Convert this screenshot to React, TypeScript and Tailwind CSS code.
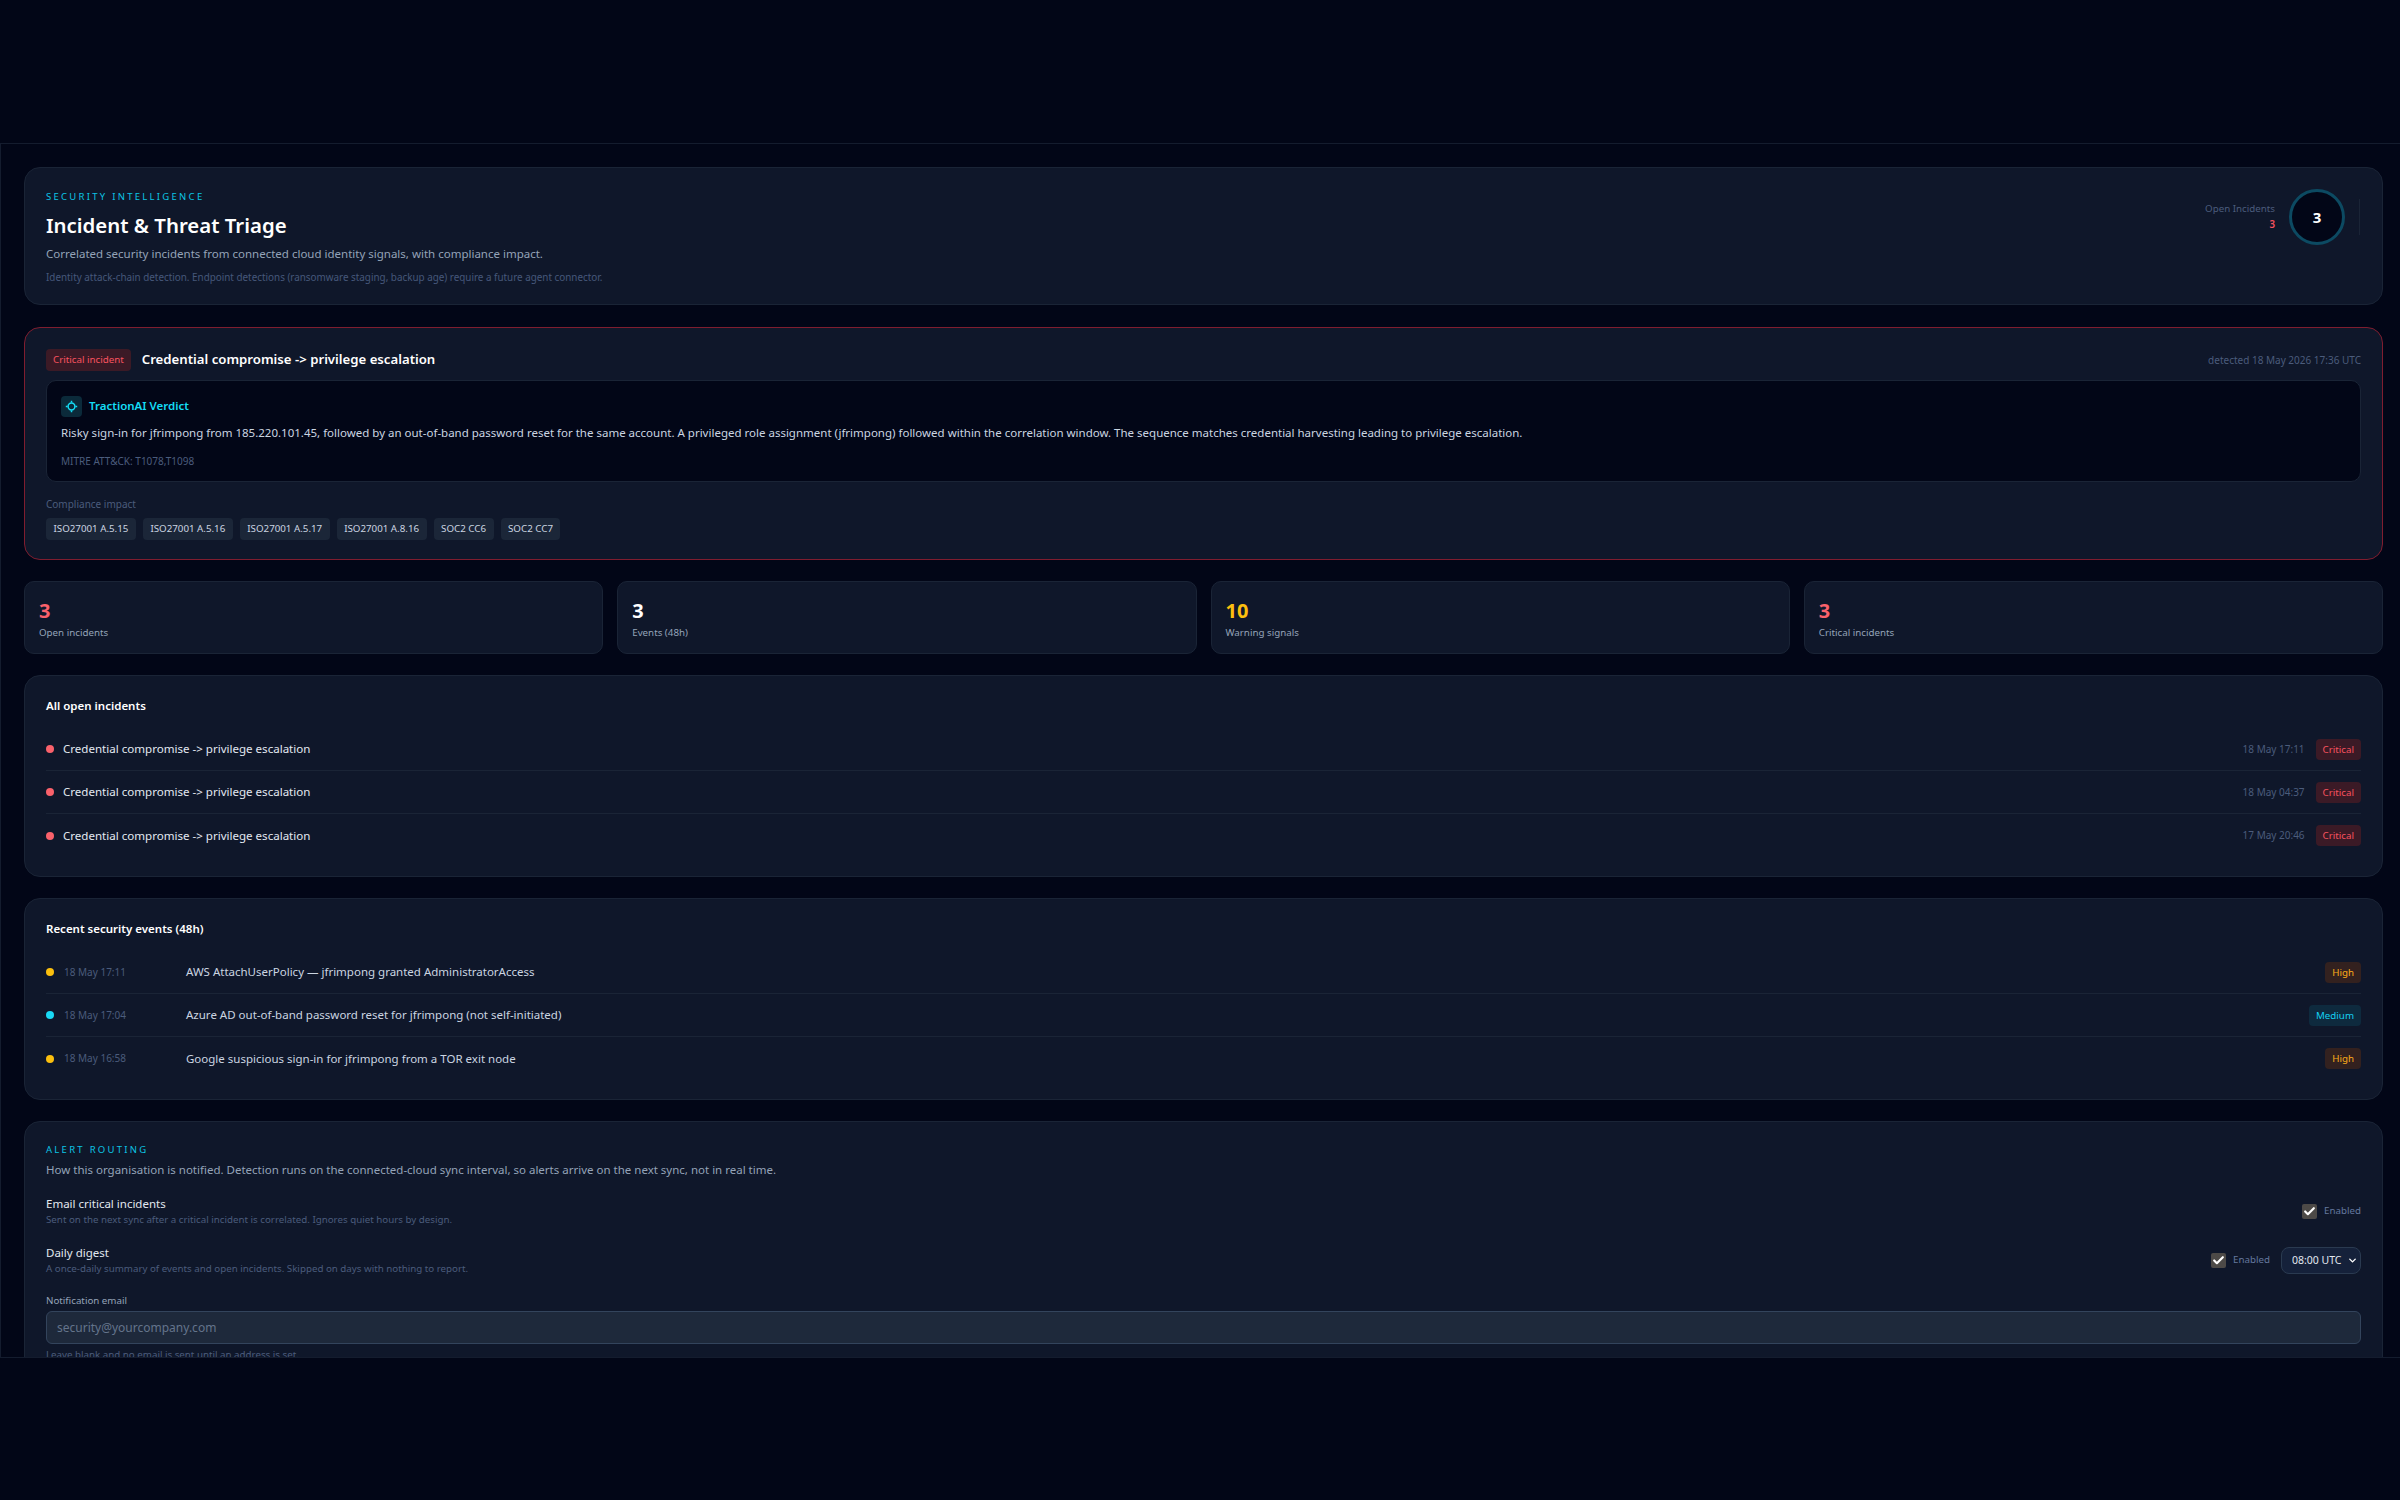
import { Check, ChevronDown } from "lucide-react";

const stats = [
  { value: "3", label: "Open incidents", color: "text-[#f9616b]" },
  { value: "3", label: "Events (48h)", color: "text-white" },
  { value: "10", label: "Warning signals", color: "text-[#fbbf0e]" },
  { value: "3", label: "Critical incidents", color: "text-[#f9616b]" },
];

const compliance = [
  "ISO27001 A.5.15",
  "ISO27001 A.5.16",
  "ISO27001 A.5.17",
  "ISO27001 A.8.16",
  "SOC2 CC6",
  "SOC2 CC7",
];

const incidents = ["18 May 17:11", "18 May 04:37", "17 May 20:46"];

const events = [
  {
    time: "18 May 17:11",
    text: "AWS AttachUserPolicy — jfrimpong granted AdministratorAccess",
    level: "High",
    dot: "bg-[#fbbf0e]",
    badge: "bg-[#33211f] text-[#fbab1a]",
  },
  {
    time: "18 May 17:04",
    text: "Azure AD out-of-band password reset for jfrimpong (not self-initiated)",
    level: "Medium",
    dot: "bg-[#19d9f5]",
    badge: "bg-[#0e2a3e] text-[#14d0f2]",
  },
  {
    time: "18 May 16:58",
    text: "Google suspicious sign-in for jfrimpong from a TOR exit node",
    level: "High",
    dot: "bg-[#fbbf0e]",
    badge: "bg-[#33211f] text-[#fbab1a]",
  },
];

function Checkbox() {
  return (
    <span className="flex h-[15px] w-[15px] items-center justify-center rounded-[2px] bg-[#4d4a47] text-white">
      <Check size={13} strokeWidth={4} />
    </span>
  );
}

export default function App() {
  return (
    <div className="h-[1500px] overflow-hidden bg-[#020617] font-['Noto_Sans',sans-serif]">
      <div className="h-[143px]" />
      {/* Main scroll area, cut off at the bottom */}
      <main className="h-[1215px] overflow-hidden border-y border-l border-[#141c2e] pt-[23px] pl-[23px] pr-[17px]">
        <div className="flex flex-col gap-[21px]">
          {/* Header */}
          <section className="mb-px flex h-[138px] justify-between rounded-[16px] border border-[#1a2436] bg-[#0f172a] pl-[21px] pr-[22px] pt-[20px]">
            <div>
              <div className="text-[9.5px] leading-[18px] tracking-[0.24em] text-[#0cc4e4]">
                SECURITY INTELLIGENCE
              </div>
              <h1 className="mt-[5px] text-[20.4px] leading-[28px] font-semibold text-white">
                Incident &amp; Threat Triage
              </h1>
              <p className="mt-[5px] text-[11.5px] leading-[20px] text-[#94a3b8]">
                Correlated security incidents from connected cloud identity signals, with compliance impact.
              </p>
              <p className="mt-[5px] text-[9.875px] leading-[16px] text-[#46577a]">
                Identity attack-chain detection. Endpoint detections (ransomware staging, backup age) require a future agent connector.
              </p>
            </div>
            <div className="flex h-[58px] items-center">
              <div className="mr-[14px] text-right text-[9.75px] leading-[16px]">
                <div className="text-[#4b5c7c]">Open Incidents</div>
                <div className="font-semibold text-[#f8525f]">3</div>
              </div>
              <div className="flex h-[56px] w-[56px] items-center justify-center rounded-full border-[3px] border-[#0c4a62] bg-[#020617] text-[15px] font-bold text-white">
                3
              </div>
              <div className="ml-[14px] h-[36px] w-px bg-[#1a2436]" />
            </div>
          </section>

          {/* Critical incident */}
          <section className="h-[233px] rounded-[16px] border-[1.5px] border-[#7f1d2f] bg-[#0f172a] px-[21px] pt-[21px]">
            <div className="flex h-[22px] items-center justify-between">
              <div className="flex items-center gap-[11px]">
                <span className="rounded-[4px] bg-[#3b1a26] px-[7px] text-[9.75px] leading-[22px] text-[#f8525f]">
                  Critical incident
                </span>
                <span className="text-[13.2px] font-semibold text-white">
                  Credential compromise -&gt; privilege escalation
                </span>
              </div>
              <span className="text-[10px] text-[#4b5c7c]">detected 18 May 2026 17:36 UTC</span>
            </div>
            <div className="mt-[9px] h-[102px] rounded-[10px] border border-[#1a2436] bg-[#020617] px-[14px] pt-[14px]">
              <div className="flex h-[22px] items-center gap-[7px]">
                <span className="flex h-[21px] w-[21px] items-center justify-center rounded-[4px] bg-[#0b2a3a] text-[#14dcf5]">
                  <svg width="13" height="13" viewBox="0 0 13 13" fill="none" stroke="currentColor" strokeWidth="1.5">
                    <circle cx="6.5" cy="6.5" r="3.4" />
                    <path d="M6.5 0.8V2.6M6.5 10.4V12.2M0.8 6.5H2.6M10.4 6.5H12.2" />
                  </svg>
                </span>
                <span className="text-[11.5px] font-semibold text-[#14dcf5]">TractionAI Verdict</span>
              </div>
              <p className="mt-[6px] text-[11.5px] leading-[20px] text-[#cbd5e1]">
                Risky sign-in for jfrimpong from 185.220.101.45, followed by an out-of-band password reset for the same account. A privileged role assignment (jfrimpong) followed within the correlation window. The sequence matches credential harvesting leading to privilege escalation.
              </p>
              <p className="mt-[10px] text-[10px] leading-[16px] text-[#4b5c7c]">MITRE ATT&amp;CK: T1078,T1098</p>
            </div>
            <div className="mt-[14px] text-[10px] leading-[16px] text-[#4b5c7c]">Compliance impact</div>
            <div className="mt-[6px] flex gap-[7px]">
              {compliance.map((c) => (
                <span
                  key={c}
                  className="rounded-[4px] bg-[#1b2638] px-[7.5px] text-[9.75px] leading-[22px] text-[#cbd5e1]"
                >
                  {c}
                </span>
              ))}
            </div>
          </section>

          {/* Stats */}
          <div className="grid grid-cols-4 gap-[14px]">
            {stats.map((s) => (
              <div
                key={s.label}
                className="h-[73px] rounded-[10px] border border-[#1a2436] bg-[#0f172a] px-[14px] pt-[15px]"
              >
                <div className={`text-[20px] leading-[28px] font-bold ${s.color}`}>{s.value}</div>
                <div className="text-[9.75px] leading-[16px] text-[#94a3b8]">{s.label}</div>
              </div>
            ))}
          </div>

          {/* Open incidents */}
          <section className="h-[202px] rounded-[16px] border border-[#1a2436] bg-[#0f172a] px-[21px] pt-[20px]">
            <h2 className="text-[11.5px] leading-[20px] font-semibold text-white">All open incidents</h2>
            <div className="mt-[12px]">
              {incidents.map((t, i) => (
                <div
                  key={t}
                  className={`flex h-[43px] items-center justify-between ${i < 2 ? "border-b border-[#1a2436]" : ""}`}
                >
                  <div className="flex items-center gap-[9px]">
                    <span className="h-[8px] w-[8px] rounded-full bg-[#f9616b]" />
                    <span className="text-[11.55px] text-[#e2e8f0]">Credential compromise -&gt; privilege escalation</span>
                  </div>
                  <div className="flex items-center gap-[11px]">
                    <span className="text-[10px] text-[#4b5c7c]">{t}</span>
                    <span className="rounded-[4px] bg-[#3b1a26] px-[7px] text-[9.75px] leading-[21px] text-[#f8525f]">
                      Critical
                    </span>
                  </div>
                </div>
              ))}
            </div>
          </section>

          {/* Recent events */}
          <section className="h-[202px] rounded-[16px] border border-[#1a2436] bg-[#0f172a] px-[21px] pt-[20px]">
            <h2 className="text-[11.5px] leading-[20px] font-semibold text-white">Recent security events (48h)</h2>
            <div className="mt-[12px]">
              {events.map((e, i) => (
                <div
                  key={e.time}
                  className={`flex h-[43px] items-center justify-between ${i < 2 ? "border-b border-[#1a2436]" : ""}`}
                >
                  <div className="flex items-center">
                    <span className={`h-[8px] w-[8px] rounded-full ${e.dot}`} />
                    <span className="ml-[10px] w-[122px] text-[10px] text-[#4b5c7c]">{e.time}</span>
                    <span className="text-[11.5px] text-[#cbd5e1]">{e.text}</span>
                  </div>
                  <span className={`rounded-[4px] px-[7px] text-[9.75px] leading-[21px] ${e.badge}`}>{e.level}</span>
                </div>
              ))}
            </div>
          </section>

          {/* Alert routing */}
          <section className="rounded-[16px] border border-[#1a2436] bg-[#0f172a] px-[21px] pt-[19px] pb-[20px]">
            <div className="text-[9.5px] leading-[18px] tracking-[0.24em] text-[#0cc4e4]">ALERT ROUTING</div>
            <p className="mt-[1px] text-[11.5px] leading-[20px] text-[#94a3b8]">
              How this organisation is notified. Detection runs on the connected-cloud sync interval, so alerts arrive on the next sync, not in real time.
            </p>
            <div className="mt-[16px] flex h-[31px] items-center justify-between">
              <div>
                <div className="text-[11.5px] leading-[16px] text-[#e2e8f0]">Email critical incidents</div>
                <div className="text-[9.75px] leading-[15px] text-[#4b5c7c]">
                  Sent on the next sync after a critical incident is correlated. Ignores quiet hours by design.
                </div>
              </div>
              <label className="flex items-center gap-[7px] text-[9.75px] text-[#64779e]">
                <Checkbox />
                Enabled
              </label>
            </div>
            <div className="mt-[18px] flex h-[31px] items-center justify-between">
              <div>
                <div className="text-[11.5px] leading-[16px] text-[#e2e8f0]">Daily digest</div>
                <div className="text-[9.75px] leading-[15px] text-[#4b5c7c]">
                  A once-daily summary of events and open incidents. Skipped on days with nothing to report.
                </div>
              </div>
              <div className="flex items-center gap-[11px]">
                <label className="flex items-center gap-[7px] text-[9.75px] text-[#64779e]">
                  <Checkbox />
                  Enabled
                </label>
                <div className="relative">
                  <select className="block h-[27px] w-[80px] appearance-none rounded-[8px] border border-[#2a3a50] bg-[#15213a] pl-[10px] text-[10.5px] text-[#e2e8f0]">
                    <option>08:00 UTC</option>
                  </select>
                  <ChevronDown size={11} strokeWidth={3} className="pointer-events-none absolute right-[3px] top-[8px] text-white" />
                </div>
              </div>
            </div>
            <div className="mt-[17px] text-[9.75px] leading-[16px] text-[#94a3b8]">Notification email</div>
            <input
              placeholder="security@yourcompany.com"
              className="mt-[2px] h-[33px] w-full rounded-[6px] border border-[#33445c] bg-[#1e293b] px-[10px] text-[12px] text-white outline-none placeholder:text-[#64748b]"
            />
            <p className="mt-[3px] text-[9.75px] leading-[16px] text-[#4b5c7c]">
              Leave blank and no email is sent until an address is set.
            </p>
          </section>
        </div>
      </main>
    </div>
  );
}
